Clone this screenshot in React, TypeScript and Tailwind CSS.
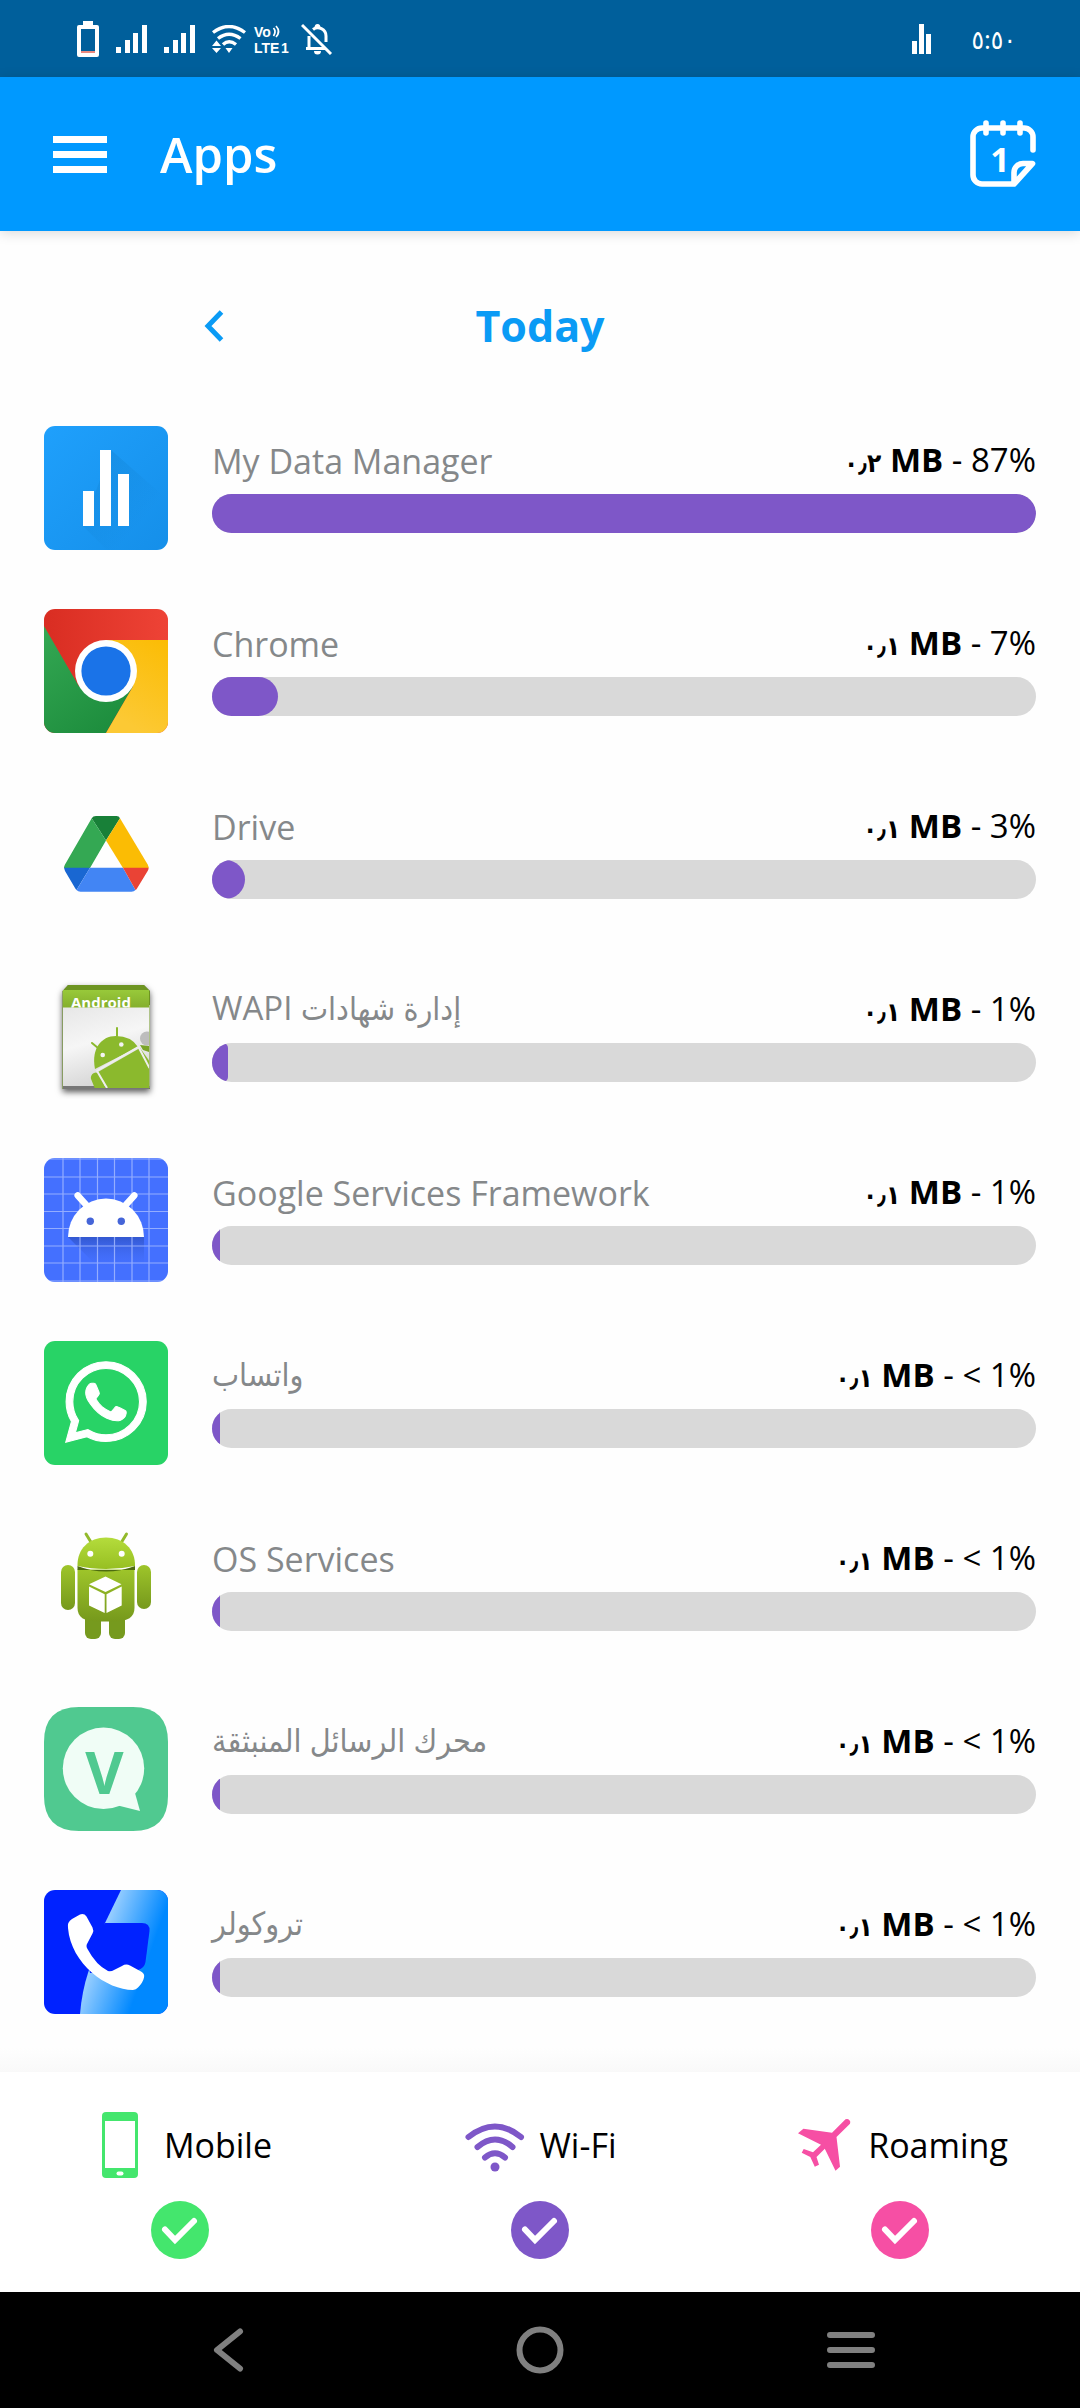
import type { ReactNode } from "react";
import { FaWhatsapp } from "react-icons/fa";

/* ---------- Status bar icons ---------- */

function BatteryIcon() {
  return (
    <svg viewBox="0 0 22 36" className="h-9 w-[22px]" aria-hidden="true">
      <path d="M6 0h10v4h4a2 2 0 0 1 2 2v28a2 2 0 0 1-2 2H2a2 2 0 0 1-2-2V6a2 2 0 0 1 2-2h4z" fill="#fff" />
      <rect x="4" y="8" width="14" height="24" fill="#005f9b" />
      <rect x="4" y="30" width="14" height="2" fill="#e8897f" />
    </svg>
  );
}

function SignalIcon() {
  return (
    <svg viewBox="0 0 31 28" className="h-7 w-[31px]" fill="#fff" aria-hidden="true">
      <rect x="0" y="22" width="5" height="6" />
      <rect x="9" y="15" width="5" height="13" />
      <rect x="17" y="8" width="5" height="20" />
      <rect x="26" y="0" width="5" height="28" />
    </svg>
  );
}

function StatusWifiIcon() {
  return (
    <svg viewBox="0 0 34 28" className="h-7 w-[34px]" aria-hidden="true">
      <g fill="none" stroke="#fff" strokeWidth="3.4">
        <path d="M1 7.500Q17-4.500 33 7.500" />
        <path d="M6 13.500Q17 5 28.500 13.500" />
        <path d="M11 19.500Q17 14 24 19.500" />
      </g>
      <path d="M13.500 23h7L17 28zM0 21l4.500-5.500L9 21zM0 23h9l-4.500 5z" fill="#fff" />
    </svg>
  );
}

function VolteIcon() {
  return (
    <svg viewBox="0 0 35 36" className="h-9 w-[35px] overflow-visible" aria-hidden="true">
      <g fontWeight="700" fontSize="14" fill="#fff" fontFamily="Liberation Sans, sans-serif">
        <text x="0" y="16">Vo</text>
        <text x="0" y="32">LTE</text>
        <text x="27" y="32">1</text>
      </g>
      <path d="M19.500 7q3 3.500 0 8M22 5q5 5.500 0 11" fill="none" stroke="#fff" strokeWidth="1.700" />
    </svg>
  );
}

function BellOffIcon() {
  return (
    <svg viewBox="0 0 32 32" className="size-8" aria-hidden="true">
      <path d="M8 25V13M5 25.500h19M12 6.500C17 2.500 25 6 25 13v6" fill="none" stroke="#fff" strokeWidth="3" />
      <path d="M13.500 5a3 4 0 0 1 6 0zM13 28h7a3.500 3.500 0 0 1-7 0z" fill="#fff" />
      <path d="M1 2l29 29" stroke="#fff" strokeWidth="3" />
    </svg>
  );
}

function DataBarsIcon() {
  return (
    <svg viewBox="0 0 19 30" className="h-[30px] w-[19px]" fill="#fff" aria-hidden="true">
      <rect x="0" y="17" width="5" height="13" />
      <rect x="7" y="0" width="5" height="30" />
      <rect x="14" y="10" width="5" height="20" />
    </svg>
  );
}

/* ---------- App icons ---------- */

function DataManagerIcon() {
  return (
    <>
      <defs>
        <linearGradient id="dm" x1="0" y1="0" x2="1" y2="1">
          <stop offset="0" stopColor="#1fa0fc" />
          <stop offset="1" stopColor="#158fe9" />
        </linearGradient>
        <linearGradient id="dmShade" x1="0" y1="0" x2="1" y2="1">
          <stop offset="0" stopColor="#0b70b8" stopOpacity=".3" />
          <stop offset=".7" stopColor="#0b70b8" stopOpacity="0" />
        </linearGradient>
      </defs>
      <rect width="124" height="124" fill="url(#dm)" />
      <path d="M67 24l57 50v50H63L39 100z" fill="url(#dmShade)" />
      <path d="M39 65h11v35H39zM56 24h11v76H56zM74 48h11v52H74z" fill="#fff" />
    </>
  );
}

function ChromeIcon() {
  return (
    <>
      <defs>
        <linearGradient id="cr" x1="0" y1="0" x2="1" y2="0">
          <stop offset="0" stopColor="#d92d22" />
          <stop offset="1" stopColor="#ee4336" />
        </linearGradient>
        <linearGradient id="cg" x1="0" y1="0" x2=".6" y2="1">
          <stop offset="0" stopColor="#34a853" />
          <stop offset="1" stopColor="#1e8e3e" />
        </linearGradient>
        <linearGradient id="cy" x1="1" y1="0" x2=".6" y2="1">
          <stop offset="0" stopColor="#fbbc04" />
          <stop offset="1" stopColor="#fcc934" />
        </linearGradient>
      </defs>
      <rect width="124" height="124" fill="url(#cr)" />
      <path d="M0 17l35 60.500 27-15.500 27 15.500L62 124H0z" fill="url(#cg)" />
      <path d="M62 31h62v93H62l27-46.500L62 62z" fill="url(#cy)" />
      <circle cx="62" cy="62" r="31" fill="#fff" />
      <circle cx="62" cy="62" r="24.600" fill="#1a73e8" />
    </>
  );
}

function DriveIcon() {
  return (
    <>
      <path d="M47.700 26.300Q49 24 52 24h20.500q2.500 0 3.500 2.300L62 48.500z" fill="#188038" />
      <path d="M47.700 26.300L62 48.500 46 76H20q0-2 1-3.500z" fill="#34a853" />
      <path d="M76 26.300l27.700 46.200q1 2 1 3.500H79L62 48.500z" fill="#fbbc04" />
      <path d="M20 75.700h26L32.500 98q-1-1-1.500-2L21 79z" fill="#1967d2" />
      <path d="M46 75.700h33L91.500 98q-1.500 1.700-4 1.700H36.500q-2.500 0-4-1.700z" fill="#4285f4" />
      <path d="M79 75.700h25.700q-.200 2-1.200 3.500L93 96.500q-.700 1-1.500 1.500z" fill="#ea4335" />
    </>
  );
}

function PackageIcon() {
  return (
    <>
      <defs>
        <linearGradient id="pkBody" x1="0" y1="0" x2=".3" y2="1">
          <stop offset="0" stopColor="#e6e6e6" />
          <stop offset=".5" stopColor="#f6f6f6" />
          <stop offset="1" stopColor="#d6d6d6" />
        </linearGradient>
        <linearGradient id="pkGreen" x1="0" y1="0" x2="0" y2="1">
          <stop offset="0" stopColor="#98c93a" />
          <stop offset="1" stopColor="#84ae2c" />
        </linearGradient>
        <clipPath id="pkClip">
          <rect x="19" y="15" width="86" height="98" />
        </clipPath>
        <clipPath id="pkBand">
          <rect x="19" y="10" width="86" height="22.500" />
        </clipPath>
        <filter id="pkShadow" x="-20%" y="-20%" width="140%" height="140%">
          <feDropShadow dx="0" dy="3" stdDeviation="3" floodColor="#000" floodOpacity=".65" />
        </filter>
      </defs>
      <path d="M24 10h76l6 6v98H18.500V16z" fill="#8a8a8a" filter="url(#pkShadow)" />
      <path d="M24 10h76l6 6v98H18.500V16z" fill="#6d9421" />
      <rect x="19" y="30" width="86.500" height="83" fill="url(#pkBody)" />
      <rect x="19" y="111" width="86.500" height="3" fill="#777" />
      <g clipPath="url(#pkClip)">
        <circle cx="103" cy="63.500" r="7" fill="#bdbdbd" />
        <path d="M96 70l9 1v6l-6-2z" fill="#7aa528" />
        <g fill="#8bb92d">
          <path d="M51 94C47 74 57 61 72 61q15 0 22 11z" />
          <path d="M54 97l42-24 10 14v27H63z" />
          <rect x="45" y="98" width="10" height="26" rx="5" transform="rotate(-22 50 98)" />
        </g>
        <path d="M73 53v8M48 68l6 5" stroke="#8bb92d" strokeWidth="2" strokeLinecap="round" />
        <path d="M52.500 96l42-24 11 21M53 96l10 17" fill="none" stroke="#eee" strokeWidth="2" />
        <circle cx="58.700" cy="80" r="2.300" fill="#f4f4f4" />
        <circle cx="77.300" cy="69.500" r="2.300" fill="#f4f4f4" />
      </g>
      <g clipPath="url(#pkBand)">
        <rect x="19" y="15" width="86.500" height="18" fill="url(#pkGreen)" />
        <text x="27" y="33" fontSize="15" fontWeight="700" fill="#fff" fontFamily="Open Sans, sans-serif">Android</text>
      </g>
    </>
  );
}

function FrameworkIcon() {
  return (
    <>
      <defs>
        <linearGradient id="fwShade" x1="0" y1="0" x2="0" y2="1">
          <stop offset="0" stopColor="#2f52c4" stopOpacity=".8" />
          <stop offset=".7" stopColor="#4470ff" stopOpacity="0" />
        </linearGradient>
      </defs>
      <rect width="124" height="124" fill="#4470ff" />
      <path d="M24 79h76v45H69z" fill="url(#fwShade)" />
      <path
        d="M19 0v124M36 0v124M53.500 0v124M70.500 0v124M88 0v124M105 0v124M0 19h124M0 36h124M0 53.500h124M0 70.500h124M0 88h124M0 105h124M0 1h124M0 123h124"
        stroke="#a9bdff"
        strokeOpacity=".8"
        strokeWidth="1.200"
      />
      <path d="M33.700 37.500L45 50M90.300 37.500L79 50" stroke="#fff" strokeWidth="6.500" strokeLinecap="round" />
      <path d="M24 79a38 38.500 0 0 1 76 0z" fill="#fff" />
      <circle cx="46.300" cy="63.300" r="3.700" fill="#4565d8" />
      <circle cx="77.300" cy="63.300" r="3.700" fill="#4565d8" />
    </>
  );
}

function WhatsAppIcon() {
  return (
    <>
      <rect width="124" height="124" fill="#28d366" />
      <FaWhatsapp x={16} y={15} size={92} color="#fff" strokeWidth={6} />
    </>
  );
}

function OsServicesIcon() {
  return (
    <>
      <defs>
        <linearGradient id="osHead" x1="0" y1="0" x2="0" y2="1">
          <stop offset="0" stopColor="#b4dc3c" />
          <stop offset="1" stopColor="#97bf22" />
        </linearGradient>
        <linearGradient id="osBody" x1="0" y1="0" x2="0" y2="1">
          <stop offset="0" stopColor="#9ec52a" />
          <stop offset=".6" stopColor="#86aa22" />
          <stop offset="1" stopColor="#76991c" />
        </linearGradient>
      </defs>
      <path d="M42 10l5.500 9M82.500 10L77 19" stroke="#93ba2b" strokeWidth="3" strokeLinecap="round" />
      <rect x="41" y="88" width="16" height="27" rx="6" fill="#769a1e" />
      <rect x="65" y="88" width="16" height="27" rx="6" fill="#769a1e" />
      <rect x="17" y="41" width="14" height="45" rx="7" fill="url(#osBody)" />
      <rect x="93" y="41" width="14" height="44" rx="7" fill="url(#osBody)" />
      <path d="M33.500 45.500h57V84q0 13.500-20 13.500H53Q33.500 97.500 33.500 84z" fill="url(#osBody)" />
      <path d="M33.500 42q14 5.500 28.500 5.500T91 42v4H33.500z" fill="#4d6b10" />
      <path d="M33.500 42C33 25 45 13.500 62 13.500S91.500 25 91 42q-14 3-29 3t-28.500-3z" fill="url(#osHead)" />
      <circle cx="46.300" cy="29.700" r="3" fill="#fff" />
      <circle cx="77.700" cy="29.700" r="3" fill="#fff" />
      <path d="M61.500 52.500L77.500 60.300 61.500 68 45 60.300zM45 62.500l15.700 7.700V89L45 81.500zM77.700 62.500L62.500 70.200V89l15.200-7.500z" fill="#fff" />
    </>
  );
}

function MessagingIcon() {
  return (
    <>
      <path d="M35 0h54q35 0 35 35v54q0 35-35 35H35Q0 124 0 89V35Q0 0 35 0z" fill="#50c990" />
      <circle cx="59.500" cy="61.300" r="40.700" fill="#f0fdf6" />
      <path d="M91 86l5 18-24-6z" fill="#f0fdf6" />
      <text x="60.500" y="87" fontSize="59" fontWeight="700" textAnchor="middle" fill="#50c990" fontFamily="Open Sans, sans-serif">V</text>
    </>
  );
}

function TruecallerIcon() {
  return (
    <>
      <defs>
        <linearGradient id="tc" gradientUnits="userSpaceOnUse" x1="52" y1="45" x2="106" y2="64">
          <stop offset="0" stopColor="#a9d6ff" />
          <stop offset="1" stopColor="#0088ff" />
        </linearGradient>
      </defs>
      <rect width="124" height="124" fill="#0022ff" />
      <path d="M77 0h47v124H36q2-23 8-41l17-50z" fill="url(#tc)" />
      <path d="M61 33h37q8 0 7.500 8l-4 31q-1 6-7.500 8L46 83 42 60z" fill="#0022ff" />
      <path
        d="M24 38q-1-6 4-9l8-4.500q4-1.500 6.500 2l6 11q1.500 3 0 6L43.500 53q-2 3 0 6Q52 75 64 81q3 1 6-1l8-4q4-2.500 8-.500l11 6q4 2 3 6-1 5-6 10-2 2-5 2.500C63 100 27 74 24 38z"
        fill="#fff"
      />
    </>
  );
}

/* ---------- Network icons ---------- */

function MobileIcon() {
  return (
    <>
      <rect x="18" y="0" width="36" height="66" rx="4" fill="#44e66d" />
      <rect x="21" y="9" width="30" height="47" fill="#fff" />
      <rect x="32.500" y="59.500" width="7" height="4" rx="2" fill="#fff" />
    </>
  );
}

function WifiIcon() {
  return (
    <>
      <g fill="none" stroke="#7e57c8" strokeWidth="6" strokeLinecap="round">
        <path d="M9.500 25Q36 4 62 25" />
        <path d="M18.500 35Q36 20 53.500 35" />
        <path d="M26 45.500Q36 37 46 45.500" />
      </g>
      <circle cx="36" cy="55" r="4.500" fill="#7e57c8" />
    </>
  );
}

function PlaneIcon() {
  return (
    <path
      d="M57.500 7.300a3.400 3.400 0 0 1 4.500 4.500L48.500 25 52 54.700l-4.500 4L36.800 36.700l-8.300 8.300L31 52.700l-4.200 2L22.300 45l-8.600-4.300 2-3.700 9.300 3.300 8-7.600L10 21.300l5.400-4.600L44 20.700z"
      fill="#f64fa4"
    />
  );
}

/* ---------- Data ---------- */

type App = {
  name: string;
  latinSuffix?: string;
  rtl?: boolean;
  amount: string;
  share: string;
  fill: number;
  edge: string;
  icon: ReactNode;
};

const apps: App[] = [
  { name: "My Data Manager", amount: "٠٫٢", share: "87%", fill: 100, edge: "rounded-r-full", icon: <DataManagerIcon /> },
  { name: "Chrome", amount: "٠٫١", share: "7%", fill: 8, edge: "rounded-r-full", icon: <ChromeIcon /> },
  { name: "Drive", amount: "٠٫١", share: "3%", fill: 4, edge: "rounded-r-full", icon: <DriveIcon /> },
  { name: "إدارة شهادات", latinSuffix: "WAPI", rtl: true, amount: "٠٫١", share: "1%", fill: 2, edge: "rounded-r-[5px]", icon: <PackageIcon /> },
  { name: "Google Services Framework", amount: "٠٫١", share: "1%", fill: 1, edge: "", icon: <FrameworkIcon /> },
  { name: "واتساب", rtl: true, amount: "٠٫١", share: "< 1%", fill: 1, edge: "", icon: <WhatsAppIcon /> },
  { name: "OS Services", amount: "٠٫١", share: "< 1%", fill: 1, edge: "", icon: <OsServicesIcon /> },
  { name: "محرك الرسائل المنبثقة", rtl: true, amount: "٠٫١", share: "< 1%", fill: 1, edge: "", icon: <MessagingIcon /> },
  { name: "تروكولر", rtl: true, amount: "٠٫١", share: "< 1%", fill: 1, edge: "", icon: <TruecallerIcon /> },
];

const networks = [
  { name: "Mobile", color: "text-[#44e66d]", icon: <MobileIcon /> },
  { name: "Wi-Fi", color: "text-[#7e57c8]", icon: <WifiIcon /> },
  { name: "Roaming", color: "text-[#f64fa4]", icon: <PlaneIcon /> },
];

/* ---------- Sections ---------- */

function StatusBar() {
  return (
    <div className="flex h-[77px] items-center bg-[#005f9b] pr-16 pl-[77px] text-white">
      <div className="flex items-center gap-[17px]">
        <BatteryIcon />
        <SignalIcon />
        <SignalIcon />
        <StatusWifiIcon />
      </div>
      <div className="ml-2 flex items-center gap-3">
        <VolteIcon />
        <BellOffIcon />
      </div>
      <div className="ml-auto flex items-center gap-10">
        <DataBarsIcon />
        <time className="text-[26px] leading-8">٥:٥٠</time>
      </div>
    </div>
  );
}

function Header() {
  return (
    <header className="relative flex h-[154px] items-center bg-[#0099ff] pr-11 pl-[53px] text-white shadow-[0_2px_12px_rgba(0,0,0,0.15)]">
      <button type="button" aria-label="Menu" className="flex w-[54px] flex-col gap-2">
        <span className="h-[7px] bg-white" />
        <span className="h-[7px] bg-white" />
        <span className="h-[7px] bg-white" />
      </button>
      <h1 className="ml-[53px] text-[49px] leading-[60px] font-semibold">Apps</h1>
      <button type="button" aria-label="Choose period" className="ml-auto">
        <svg viewBox="0 0 66 68" className="h-[68px] w-[66px]" aria-hidden="true">
          <g fill="none" stroke="#fff" strokeWidth="5.600" strokeLinecap="round" strokeLinejoin="round">
            <path d="M63 30V17a9 9 0 0 0-9-9H12a9 9 0 0 0-9 9v38a9 9 0 0 0 9 9h32l18.500-20.500H53a9 9 0 0 0-9 9V63" />
            <path d="M16 3v10M33 3v10M50 3v10" />
          </g>
          <text x="30" y="52" fontSize="34" fontWeight="700" textAnchor="middle" fill="#fff" fontFamily="Open Sans, sans-serif">1</text>
        </svg>
      </button>
    </header>
  );
}

function AppRow({ app }: { app: App }) {
  return (
    <li className="flex items-center gap-11">
      <svg viewBox="0 0 124 124" className="size-[124px] shrink-0 rounded-[11px]" aria-hidden="true">
        {app.icon}
      </svg>
      <div className="flex min-w-0 flex-1 flex-col gap-4">
        <div className="flex h-[35px] items-center justify-between text-[33px] leading-[36px] whitespace-nowrap">
          {app.rtl ? (
            <h2 dir="rtl" className="pb-1 text-[32px] text-[#85888a]">
              {app.name}
              {app.latinSuffix && <span className="text-[33px]"> {app.latinSuffix}</span>}
            </h2>
          ) : (
            <h2 className="text-[34px] text-[#85888a]">{app.name}</h2>
          )}
          <p className="text-black">
            <b className="font-bold">
              <span className="text-[26px]">{app.amount}</span> MB
            </b>{" "}
            - {app.share}
          </p>
        </div>
        <div
          role="progressbar"
          aria-label={app.name}
          aria-valuenow={app.fill}
          className="h-[39px] overflow-hidden rounded-full bg-[#d9d9d9]"
        >
          <div className={`h-full bg-[#7e57c8] ${app.edge}`} style={{ width: `${app.fill}%` }} />
        </div>
      </div>
    </li>
  );
}

export default function App() {
  return (
    <div className="flex min-h-screen flex-col bg-white font-['Open_Sans','DejaVu_Sans_Condensed','DejaVu_Sans',sans-serif]">
      <StatusBar />
      <Header />
      <main className="flex-1 bg-[#fefefe] px-11 pb-[34px]">
        <div className="grid grid-cols-[1fr_auto_1fr] items-center pt-[65px] pb-[70px]">
          <button type="button" aria-label="Previous day" className="ml-40 w-5">
            <svg viewBox="0 0 20 32" className="h-8 w-5" aria-hidden="true">
              <path d="M17.500 2L4 16l13.500 14" fill="none" stroke="#0a9bf5" strokeWidth="5" />
            </svg>
          </button>
          <h2 className="text-[43px] leading-[60px] font-bold text-[#0a9bf5]">Today</h2>
        </div>
        <ul className="flex flex-col gap-[59px]">
          {apps.map((app) => (
            <AppRow key={app.name} app={app} />
          ))}
        </ul>
      </main>
      <div className="h-6 bg-linear-to-b from-[#fefefe] to-[#f9f9f9]" />
      <fieldset className="grid grid-cols-3 bg-white pt-10 pb-[33px]">
        {networks.map((network) => (
          <label key={network.name} className="relative flex flex-col items-center gap-[23px]">
            <span className="flex items-center gap-2">
              <svg viewBox="0 0 72 66" className="h-[66px] w-[72px]" aria-hidden="true">
                {network.icon}
              </svg>
              <span className="pr-1 text-[34px] leading-[46px] text-black">{network.name}</span>
            </span>
            <input type="checkbox" defaultChecked className="peer sr-only" />
            <svg viewBox="0 0 58 58" className={`size-[58px] opacity-30 peer-checked:opacity-100 ${network.color}`} aria-hidden="true">
              <circle cx="29" cy="29" r="29" fill="currentColor" />
              <path d="M14 28.500L24 39 43 20" fill="none" stroke="#fff" strokeWidth="6" strokeLinecap="round" />
            </svg>
          </label>
        ))}
      </fieldset>
      <nav className="grid h-[116px] grid-cols-3 items-center bg-black px-[73px]">
        <button type="button" aria-label="Back" className="flex justify-center">
          <svg viewBox="0 0 48 48" className="size-12" aria-hidden="true">
            <path d="M35 5.500L12 24l23 18.500" fill="none" stroke="#808080" strokeWidth="6" strokeLinecap="round" strokeLinejoin="round" />
          </svg>
        </button>
        <button type="button" aria-label="Home" className="flex justify-center">
          <svg viewBox="0 0 48 48" className="size-12" aria-hidden="true">
            <circle cx="24" cy="24" r="20.500" fill="none" stroke="#808080" strokeWidth="6" />
          </svg>
        </button>
        <button type="button" aria-label="Recent apps" className="flex justify-center">
          <svg viewBox="0 0 48 48" className="size-12" aria-hidden="true">
            <path d="M3 9h42M3 24h42M3 39h42" stroke="#808080" strokeWidth="6" strokeLinecap="round" />
          </svg>
        </button>
      </nav>
    </div>
  );
}
